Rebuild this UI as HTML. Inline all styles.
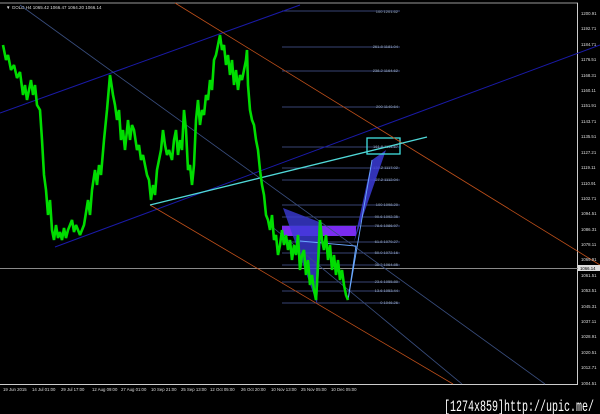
<!DOCTYPE html><html><head><style>body{margin:0;background:#000;width:600px;height:414px;overflow:hidden}svg{display:block}text{font-family:"Liberation Sans",sans-serif}</style></head><body>
<svg width="600" height="414" viewBox="0 0 600 414">
<rect width="600" height="414" fill="#000"/>
<line x1="0" y1="3" x2="578" y2="3" stroke="#999" stroke-width="1"/>
<line x1="577.5" y1="3" x2="577.5" y2="385" stroke="#ccc"/>
<line x1="0" y1="384.5" x2="578" y2="384.5" stroke="#ccc"/>
<line x1="0" y1="268.5" x2="578" y2="268.5" stroke="#8a8a8a"/>
<text x="6" y="9" fill="#ddd" font-size="4.5">▼ GOLD,H4 1065.42 1066.47 1064.20 1066.14</text>
<g stroke="#4a5a9a" stroke-width="0.8">
<line x1="282" y1="11" x2="400" y2="11"/><line x1="282" y1="47" x2="400" y2="47"/><line x1="282" y1="71" x2="400" y2="71"/><line x1="282" y1="107" x2="400" y2="107"/><line x1="282" y1="147" x2="400" y2="147"/><line x1="282" y1="168" x2="400" y2="168"/><line x1="282" y1="180" x2="400" y2="180"/><line x1="282" y1="205" x2="400" y2="205"/><line x1="282" y1="217" x2="400" y2="217"/><line x1="282" y1="226" x2="400" y2="226"/><line x1="282" y1="242" x2="400" y2="242"/><line x1="282" y1="253" x2="400" y2="253"/><line x1="282" y1="265" x2="400" y2="265"/><line x1="282" y1="282" x2="400" y2="282"/><line x1="282" y1="291" x2="400" y2="291"/><line x1="282" y1="303" x2="400" y2="303"/>
</g>
<g fill="#9ab" font-size="4" text-anchor="end">
<text x="398" y="13">100 1201.62</text><text x="398" y="48">261.8 1181.04</text><text x="398" y="72">238.2 1164.62</text><text x="398" y="108">200 1140.64</text><text x="398" y="148">161.8 1114.67</text><text x="398" y="169">138.2 1117.02</text><text x="398" y="181">127.2 1112.04</text><text x="398" y="206">100 1098.20</text><text x="398" y="218">90.6 1092.35</text><text x="398" y="227">78.6 1086.97</text><text x="398" y="243">61.8 1079.27</text><text x="398" y="254">50.0 1072.16</text><text x="398" y="266">38.2 1064.85</text><text x="398" y="283">23.6 1055.80</text><text x="398" y="292">13.6 1053.44</text><text x="398" y="304">0 1046.26</text>
</g>
<rect x="282" y="226" width="74" height="10" fill="#7a2cf0"/>
<polygon points="283,208 322,223 317,304" fill="#3b3bd6" opacity="0.8"/>
<polygon points="354,242 372,160 386,150" fill="#3b3bd6" opacity="0.85"/>
<rect x="367" y="138" width="33" height="16" fill="none" stroke="#40e0e0" stroke-width="1.3"/>
<line x1="0" y1="113" x2="300" y2="5" stroke="#1a1aa8" stroke-width="1"/>
<line x1="55" y1="247" x2="600" y2="45" stroke="#1a1aa8" stroke-width="1"/>
<line x1="175" y1="3" x2="600" y2="265" stroke="#c0501a" stroke-width="0.8"/>
<line x1="150" y1="205" x2="453" y2="384" stroke="#c0501a" stroke-width="0.8"/>
<line x1="20" y1="5" x2="545" y2="384" stroke="#3a4f80" stroke-width="0.8"/>
<line x1="270" y1="225" x2="462" y2="384" stroke="#3a4f80" stroke-width="0.8"/>
<line x1="150" y1="205" x2="427" y2="137" stroke="#50d8d8" stroke-width="1.3"/>
<polyline points="300,241 356,246 348,300 372,160" fill="none" stroke="#6aa8ff" stroke-width="0.9"/>
<polyline fill="none" stroke="#00dd00" stroke-width="2.6" stroke-linejoin="bevel" points="3,45 6,60 8,55 11,70 14,65 17,78 20,72 23,95 25,85 27,100 29,90 31,80 33,95 35,85 37,105 40,110 42,140 44,175 46,190 48,215 50,200 52,230 54,240 56,225 58,238 60,232 62,240 64,228 66,238 68,230 72,220 74,232 76,225 80,235 84,225 88,200 90,215 92,190 95,170 97,185 99,165 101,175 104,140 107,110 110,75 113,95 115,105 117,120 119,110 121,140 123,130 125,150 128,120 130,140 132,125 134,130 137,150 139,145 141,160 143,155 145,165 147,175 149,180 151,200 153,185 155,195 157,170 159,160 161,150 163,130 165,145 167,155 169,150 172,160 174,140 176,130 178,155 180,140 182,150 184,110 186,130 188,170 190,165 192,185 194,165 196,120 198,100 200,125 202,110 204,115 206,95 208,100 210,80 212,90 214,60 216,55 218,45 220,35 222,50 224,45 226,65 228,55 230,75 232,60 234,85 236,70 238,90 240,75 242,80 244,70 246,60 247,50 248,85 250,110 252,120 254,125 256,140 258,150 260,170 262,185 264,195 266,215 268,220 270,230 272,215 274,240 276,235 278,255 280,245 282,230 284,245 286,235 288,250 290,240 292,260 294,245 296,255 298,235 300,270 302,255 304,250 306,275 308,260 310,285 312,275 314,290 316,300 318,265 320,220 322,240 324,250 326,235 328,260 330,245 332,270 334,255 336,275 338,260 340,280 342,270 344,285 346,295 348,300"/>
<g fill="#ddd" font-size="4.3">
<text x="581" y="15">1200.91</text><text x="581" y="30">1192.71</text><text x="581" y="46">1184.71</text><text x="581" y="61">1176.51</text><text x="581" y="77">1168.31</text><text x="581" y="92">1160.11</text><text x="581" y="107">1151.91</text><text x="581" y="123">1143.71</text><text x="581" y="138">1135.51</text><text x="581" y="154">1127.21</text><text x="581" y="169">1119.11</text><text x="581" y="185">1110.91</text><text x="581" y="200">1102.71</text><text x="581" y="215">1094.51</text><text x="581" y="231">1086.31</text><text x="581" y="246">1078.11</text><text x="581" y="261">1069.91</text><text x="581" y="277">1061.51</text><text x="581" y="292">1053.51</text><text x="581" y="308">1045.31</text><text x="581" y="323">1037.11</text><text x="581" y="338">1028.91</text><text x="581" y="354">1020.51</text><text x="581" y="369">1012.71</text><text x="581" y="385">1004.51</text>
</g>
<rect x="578" y="265" width="22" height="6" fill="#ddd"/>
<text x="580" y="270" fill="#000" font-size="4.3">1066.14</text>
<g fill="#ddd" font-size="4.3">
<text x="3" y="391">19 Jun 2015</text><text x="32" y="391">14 Jul 01:00</text><text x="61" y="391">29 Jul 17:00</text><text x="92" y="391">12 Aug 09:00</text><text x="121" y="391">27 Aug 01:00</text><text x="151" y="391">10 Sep 21:00</text><text x="181" y="391">25 Sep 13:00</text><text x="210" y="391">12 Oct 05:00</text><text x="241" y="391">26 Oct 20:00</text><text x="271" y="391">10 Nov 13:00</text><text x="301" y="391">25 Nov 05:00</text><text x="331" y="391">10 Dec 05:00</text>
</g>
<text x="444" y="411" fill="#fff" font-size="16" textLength="150" lengthAdjust="spacingAndGlyphs" style="font-family:'Liberation Mono',monospace">[1274x859]http://upic.me/</text>
</svg>
</body></html>
